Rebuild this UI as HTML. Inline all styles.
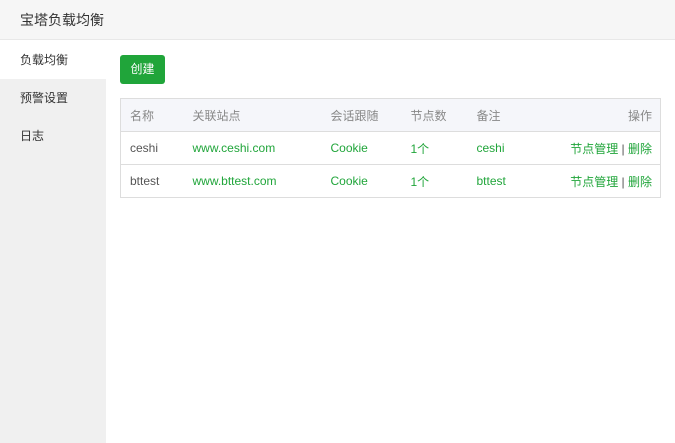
<!DOCTYPE html>
<html><head><meta charset="utf-8"><style>
*{margin:0;padding:0;box-sizing:border-box}
body{width:675px;height:443px;overflow:hidden;background:#fff;font-family:"Liberation Sans","Noto Sans CJK SC",sans-serif;font-size:12px;color:#555;position:relative}
.top{position:absolute;left:0;top:0;width:675px;height:40px;background:#f6f6f6;border-bottom:1px solid #e8e8e8;line-height:40px;padding-left:20px;font-size:14px;color:#333}
.side{position:absolute;left:0;top:41px;width:106px;height:402px;background:#f0f0f0}
.side div{height:38px;line-height:38px;padding-left:20px;color:#333}
.side .on{background:#fff}
.btn{position:absolute;left:120px;top:55px;width:45px;height:29px;background:#20a53a;border-radius:3px;color:#fff;line-height:29px;text-align:center}
table{position:absolute;left:120px;top:98px;width:541px;border:1px solid #ddd;border-collapse:collapse}
th{background:#f5f6fa;color:#888;font-weight:normal;text-align:left;height:33px;padding-left:9px;border-bottom:1px solid #ddd}
td{height:33px;padding-left:9px;border-bottom:1px solid #ddd;color:#20a53a}
td:first-child{color:#555}
.r{text-align:right;padding-right:8px}
.r span{color:#555}
</style></head><body>
<div class="top">宝塔负载均衡</div>
<div class="side"><div class="on">负载均衡</div><div>预警设置</div><div>日志</div></div>
<div class="btn">创建</div>
<table>
<tr><th style="width:63px">名称</th><th style="width:138px">关联站点</th><th style="width:80px">会话跟随</th><th style="width:66px">节点数</th><th>备注</th><th class="r">操作</th></tr>
<tr><td>ceshi</td><td>www.ceshi.com</td><td>Cookie</td><td>1个</td><td>ceshi</td><td class="r">节点管理 <span>|</span> 删除</td></tr>
<tr><td>bttest</td><td>www.bttest.com</td><td>Cookie</td><td>1个</td><td>bttest</td><td class="r">节点管理 <span>|</span> 删除</td></tr>
</table>
</body></html>
